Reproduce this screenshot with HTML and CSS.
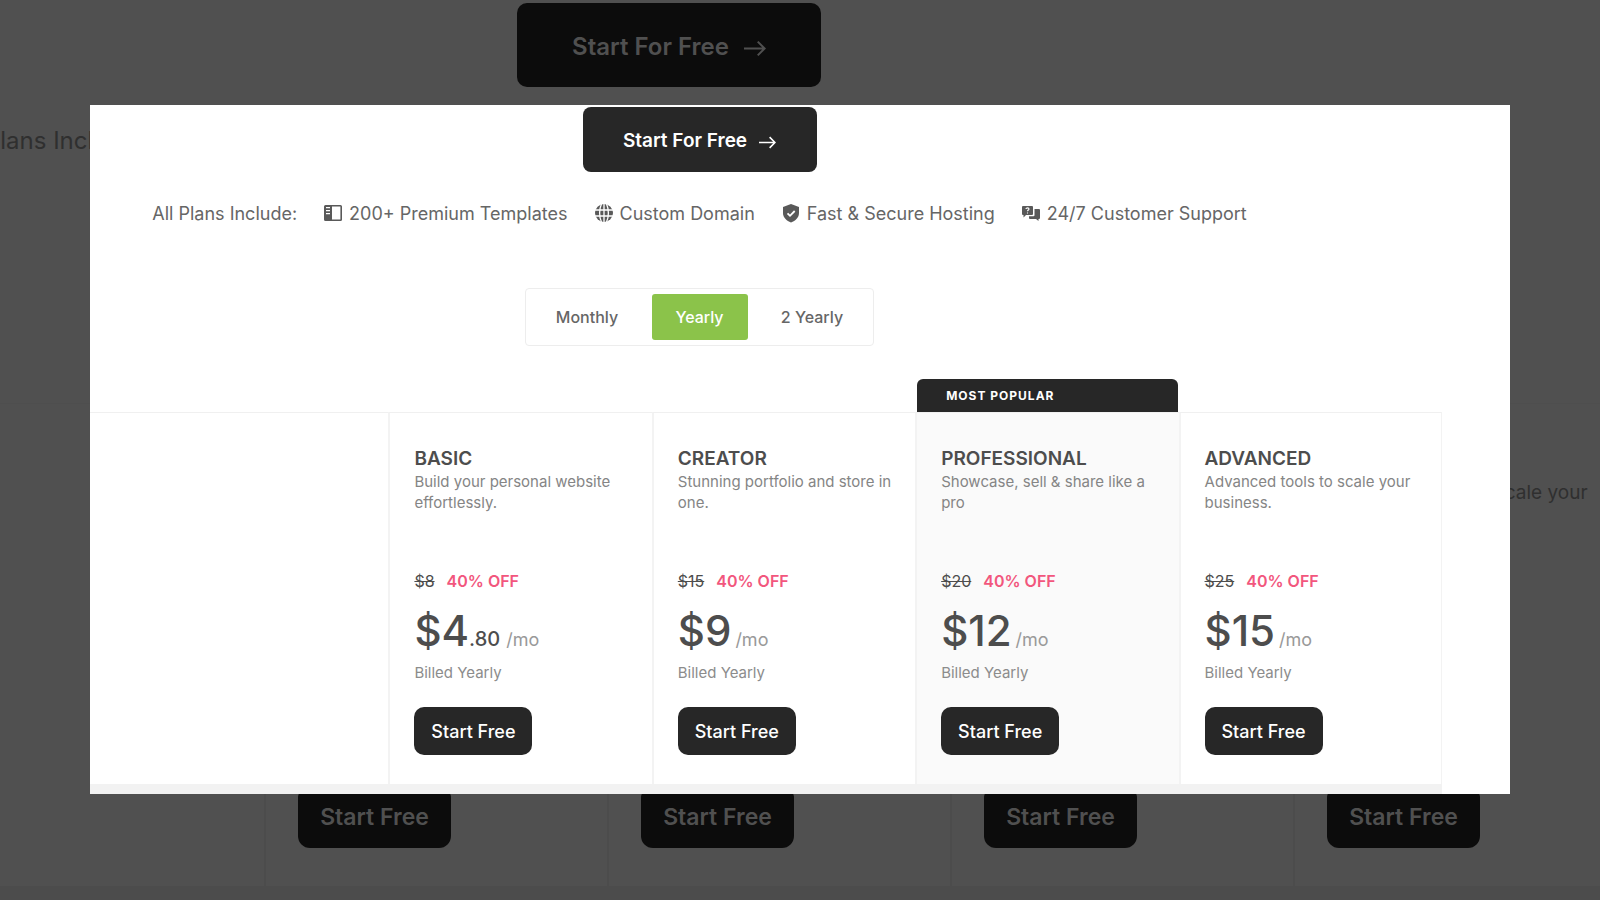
FILE: index.html
```html
<!DOCTYPE html>
<html lang="en">
<head>
<meta charset="utf-8">
<meta name="viewport" content="width=device-width, initial-scale=1">
<title>Pricing plans</title>
<link rel="stylesheet" href="styles.css">
</head>
<body>
<div class="stage">
  <div class="backdrop">
    <div class="backdrop-head">
      <button class="backdrop-cta" type="button">Start For Free
        <svg class="backdrop-arrow" viewBox="0 0 16 12" fill="none" stroke="currentColor" stroke-width="1.5"><path d="M0 6h15M10 1l5 5-5 5"/></svg>
      </button>
    </div>
    <p class="backdrop-include">All Plans Include:</p>
    <div class="backdrop-table">
      <div></div>
      <div class="backdrop-col"><button class="backdrop-start" type="button">Start Free</button></div>
      <div class="backdrop-col"><button class="backdrop-start" type="button">Start Free</button></div>
      <div class="backdrop-col"><button class="backdrop-start" type="button">Start Free</button></div>
      <div class="backdrop-col"><p class="backdrop-desc">Advanced tools to scale your</p><button class="backdrop-start" type="button">Start Free</button></div>
    </div>
  </div>

  <main class="panel">
    <header class="head">
      <button class="cta" type="button">Start For Free
        <svg class="arrow" viewBox="0 0 16 12" fill="none" stroke="currentColor" stroke-width="1.5"><path d="M0 6h15M10 1l5 5-5 5"/></svg>
      </button>
      <ul class="features">
        <li>All Plans Include:</li>
        <li>
          <svg class="icon" viewBox="0 0 20 20"><path fill="currentColor" fill-rule="evenodd" d="M2.500 1h15A1.500 1.500 0 0 1 19 2.500v13a1.500 1.500 0 0 1-1.500 1.500h-15A1.500 1.500 0 0 1 1 15.500v-13A1.500 1.500 0 0 1 2.500 1zM9 2.600v12.800h8.400V2.600zM3 3v1.300h4V3zm0 3v1.300h4V6zm0 3v1.300h4V9z"/></svg>
          200+ Premium Templates
        </li>
        <li>
          <svg class="icon" viewBox="0 0 20 20"><circle cx="10" cy="9" r="9" fill="currentColor"/><path fill="none" stroke="#fff" stroke-width="1.300" d="M1 6h18M1 12h18M10 0v18M7.500 0C5 5 5 13 7.500 18M12.500 0C15 5 15 13 12.500 18"/></svg>
          Custom Domain
        </li>
        <li>
          <svg class="icon" viewBox="0 0 20 20"><path fill="currentColor" d="M10 0l8 3v6c0 4.500-3.500 7.800-8 9.500C5.500 16.800 2 13.500 2 9V3z"/><path fill="none" stroke="#fff" stroke-width="1.800" d="M6.500 9.300L9 11.800l4.700-4.800"/></svg>
          Fast &amp; Secure Hosting
        </li>
        <li>
          <svg class="icon" viewBox="0 0 20 20"><path fill="currentColor" d="M2 2h9a1 1 0 0 1 1 1v7a1 1 0 0 1-1 1H5l-2.500 2.500V11H2a1 1 0 0 1-1-1V3a1 1 0 0 1 1-1z"/><path fill="currentColor" d="M13.500 5H18a1 1 0 0 1 1 1v8a1 1 0 0 1-1 1h-.5v2L15 15H9a1 1 0 0 1-1-1v-1.700h4.500a1 1 0 0 0 1-1z"/><path fill="none" stroke="#fff" stroke-width="1.100" d="M5 5c0-1.500 3-1.500 3 0 0 1-1.500 1-1.500 2.300M6.500 8.400v1.100"/></svg>
          24/7 Customer Support
        </li>
      </ul>
      <div class="periods">
        <button class="period" type="button">Monthly</button>
        <button class="period period-active" type="button" aria-pressed="true">Yearly</button>
        <button class="period" type="button">2 Yearly</button>
      </div>
    </header>

    <div class="plans">
      <div class="badge">MOST POPULAR</div>
      <div class="blank"></div>
      <section class="plan">
        <h2 class="name">BASIC</h2>
        <p class="desc">Build your personal website effortlessly.</p>
        <p class="offer"><s class="was">$8</s><span class="off">40% OFF</span></p>
        <p class="price">$4<span class="cents">.80</span><span class="unit">/mo</span></p>
        <p class="billed">Billed Yearly</p>
        <button class="start" type="button">Start Free</button>
      </section>
      <section class="plan">
        <h2 class="name">CREATOR</h2>
        <p class="desc">Stunning portfolio and store in one.</p>
        <p class="offer"><s class="was">$15</s><span class="off">40% OFF</span></p>
        <p class="price">$9<span class="unit">/mo</span></p>
        <p class="billed">Billed Yearly</p>
        <button class="start" type="button">Start Free</button>
      </section>
      <section class="plan plan-popular">
        <h2 class="name">PROFESSIONAL</h2>
        <p class="desc">Showcase, sell &amp; share like a pro</p>
        <p class="offer"><s class="was">$20</s><span class="off">40% OFF</span></p>
        <p class="price">$12<span class="unit">/mo</span></p>
        <p class="billed">Billed Yearly</p>
        <button class="start" type="button">Start Free</button>
      </section>
      <section class="plan plan-last">
        <h2 class="name">ADVANCED</h2>
        <p class="desc">Advanced tools to scale your business.</p>
        <p class="offer"><s class="was">$25</s><span class="off">40% OFF</span></p>
        <p class="price">$15<span class="unit">/mo</span></p>
        <p class="billed">Billed Yearly</p>
        <button class="start" type="button">Start Free</button>
      </section>
      <div class="strip"></div>
    </div>
  </main>
</div>
</body>
</html>
```
FILE: styles.css
```css
* { box-sizing: border-box; }
body { margin: 0; background: #505050; font-family: Inter, "Liberation Sans", sans-serif; }
h2, p, ul { margin: 0; padding: 0; }
button { font: inherit; border: 0; padding: 0; cursor: pointer; }

.stage { display: grid; min-height: 100vh; overflow: hidden; }
.backdrop, .panel { grid-area: 1 / 1; min-width: 0; }

.backdrop { display: flex; flex-direction: column; overflow: hidden; padding-top: 3px; color: #2f2f2f; }
.backdrop-head { display: flex; justify-content: center; padding-right: 262px; }
.backdrop-cta { display: flex; align-items: center; justify-content: center; gap: 15px; width: 304px; height: 84px; padding-top: 3px; border-radius: 10px; background: #0c0c0c; color: #505050; font-size: 24px; font-weight: 600; }
.backdrop-arrow { width: 22px; height: 17px; margin-top: 4px; }
.backdrop-include { margin: 38px 0 0 -50px; font-size: 24px; line-height: 32px; }
.backdrop-table { display: grid; grid-template-columns: 264px repeat(4, 343px); flex: 1; margin-top: 246px; border-top: 1px solid #4e4e4e; border-bottom: 14px solid #4c4c4c; }
.backdrop-col { display: flex; flex-direction: column; align-items: flex-start; padding: 76px 0 38px 32px; border-left: 2px solid #4c4c4c; }
.backdrop-desc { font-size: 19px; line-height: 26px; white-space: nowrap; }
.backdrop-start { width: 153px; height: 62px; margin-top: auto; border-radius: 12px; background: #0c0c0c; color: #505050; font-size: 23px; font-weight: 600; }

.panel { width: 88.75%; margin: 105px auto; padding-top: 2px; background: #fff; align-self: start; color: #4d4d4d; }
.head { display: flex; flex-direction: column; align-items: center; padding-right: 201px; }
.cta { display: flex; align-items: center; justify-content: center; gap: 12px; width: 234px; height: 65px; padding-top: 2px; border-radius: 8px; background: #272727; color: #fff; font-size: 19px; font-weight: 600; }
.arrow { width: 17px; height: 13px; margin-top: 3px; }
.features { display: flex; gap: 26px; margin-top: 28px; list-style: none; font-size: 18px; line-height: 28px; color: #666; white-space: nowrap; }
.features li { display: flex; align-items: center; gap: 6px; }
.icon { width: 20px; height: 20px; color: #595959; }
.periods { display: flex; justify-content: space-between; width: 349px; margin-top: 60px; padding: 5px; border: 1px solid #ededed; border-radius: 4px; }
.period { width: 112px; height: 46px; border-radius: 3px; background: transparent; color: #666; font-size: 16px; font-weight: 500; }
.period-active { width: 96px; background: #8bc34a; color: #fff; }

.plans { display: grid; grid-template-columns: 298fr repeat(4, 263fr) 68fr; margin-top: 33px; }
.badge { grid-column: 4; margin: 0 1px 0 2px; padding-left: 29px; border-radius: 6px 6px 0 0; background: #272727; color: #fff; font-size: 12px; font-weight: 700; line-height: 33px; letter-spacing: 1px; }
.blank { grid-column: 1; border-top: 1px solid #f0f0f0; }
.plan { padding: 34px 20px 29px 24px; border-top: 1px solid #f0f0f0; border-left: 2px solid #f3f3f3; }
.plan-popular { background: #fafafa; }
.plan-last { border-right: 1px solid #f3f3f3; }
.name { font-size: 19px; font-weight: 600; line-height: 24px; }
.desc { min-height: 63px; font-size: 15px; line-height: 21px; color: #858585; }
.offer { display: flex; gap: 12px; margin-top: 35px; font-size: 16px; line-height: 24px; }
.off { color: #f2567d; font-weight: 600; }
.price { margin-top: 12px; font-size: 42px; font-weight: 500; line-height: 52px; }
.cents { font-size: 20px; }
.unit { margin-left: 4px; font-size: 18px; font-weight: 400; color: #999; }
.cents + .unit { margin-left: 6px; }
.billed { margin-top: -3px; font-size: 15px; line-height: 20px; color: #8c8c8c; }
.start { width: 118px; height: 48px; margin-top: 24px; border-radius: 10px; background: #272727; color: #fff; font-size: 18px; font-weight: 500; }
.strip { grid-column: 1 / 6; height: 10px; background: #f2f2f2; }
```
